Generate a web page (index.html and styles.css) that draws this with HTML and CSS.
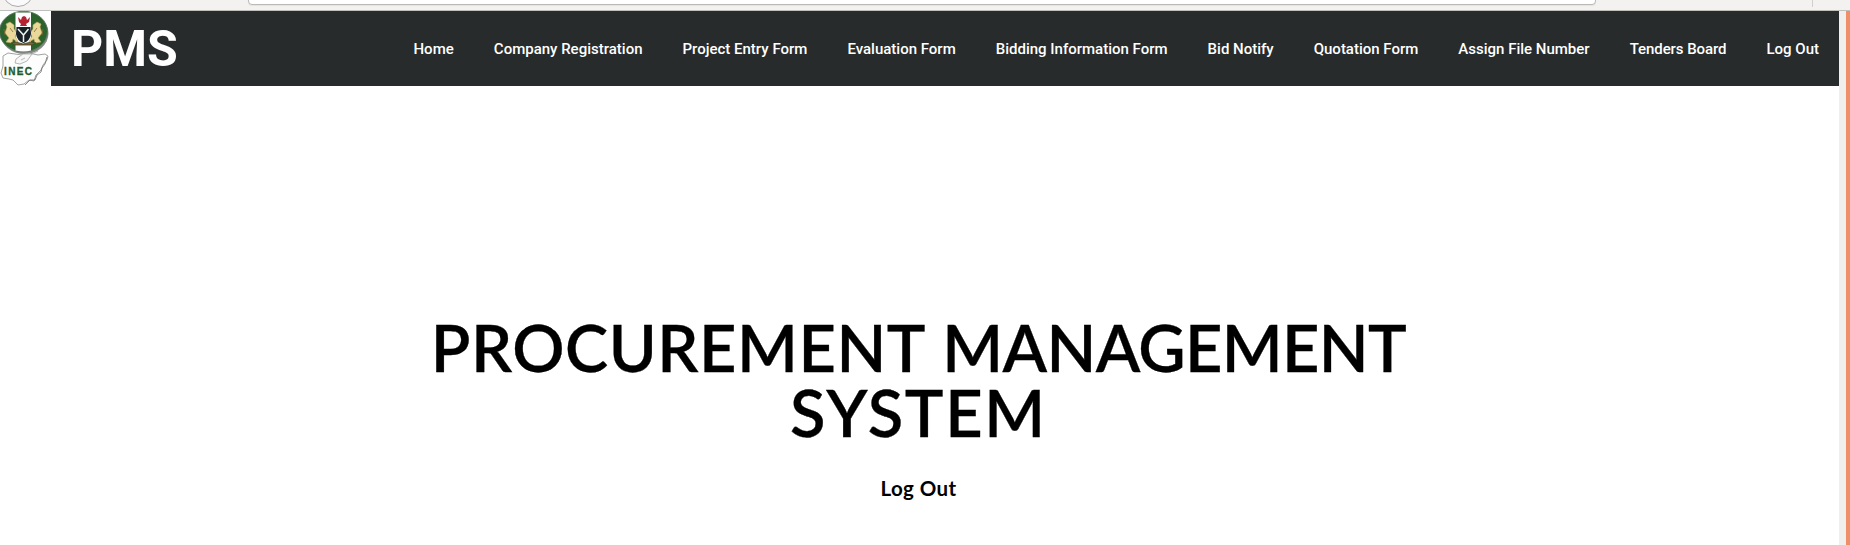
FILE: index.html
```html
<!DOCTYPE html>
<html lang="en">
<head>
<meta charset="utf-8">
<title>Procurement Management System</title>
<link rel="stylesheet" href="styles.css">
</head>
<body>
<div class="chrome">
  <span class="back"></span>
  <span class="address"></span>
  <span class="divider"></span>
</div>
<div class="window">
  <div class="page">
    <header class="navbar">
      <a class="logo">
        <svg width="51" height="75" viewBox="0 0 51 75">
          <rect width="51" height="75" fill="#fff"/>
          <ellipse cx="24.500" cy="22.500" rx="24" ry="20.500" fill="#858985"/>
          <ellipse cx="23.500" cy="20.500" rx="24" ry="20.300" fill="#2b632c" stroke="#607865"/>
          <path d="M15.500 1.500h15.500v38q-7 2-15.500 0z" fill="#fff"/>
          <path d="M18 6l1 5 2 2-1 2h7l-1-2 3-2 1-5-3 3-1-3-2-1-2 1-1 3z" fill="#b52231"/>
          <path d="M6 31l3-4-4-5 2-6-1-3 4-2 4 3 0 4 3 4-2 3 3 6-5-3-1 4zM41 31l-3-4 4-5-2-6 1-3-4-2-4 3 0 4-3 4 2 3-3 6 5-3 1 4z" fill="#ead79a" stroke="#c3a65c" stroke-width=".6"/>
          <path d="M4 18l1 6M43 18l-1 6M10 17l3 4M37 17l-3 4" stroke="#826a31" stroke-width=".8"/>
          <path d="M16.500 16h14l.5 7q-1 7-7.500 9-6.500-2-7.500-9z" fill="#182126"/>
          <path d="M18 18l5.500 6 5-6M23.500 24v7" fill="none" stroke="#eef2f3" stroke-width="1.500"/>
          <path d="M11 32l5-1 7 2 8-2 5 1-4 2H15z" fill="#8b5c2e" stroke="#364a26" stroke-width=".8"/>
          <path d="M3 45l5-3 7 1 7 1 7-2 9 2 7-1 3 2-1 4-4 5-2 5-5 5-2 6-5-1-5 4-6 1-5-5-4-1-6-1-2-5 2-7z" fill="#fcfdfc" stroke="#a1a4a1" stroke-width="1"/>
          <path d="M16 48l7-5h9l-5 7-7 3-5-1zM21 49l4-2M32 43l6-3" fill="#f8f8f8" stroke="#a5a8a5" stroke-width=".8"/>
          <path d="M47 46l-2 7-3 4-1 4-4 3-2 5h-5l-5 5" fill="none" stroke="#686d68" stroke-width=".8"/>
          <text class="logo-text" x="4" y="64" textLength="28">INEC</text>
        </svg>
      </a>
      <a class="brand">PMS</a>
      <nav class="menu">
        <a class="wide">Home</a><a>Company Registration</a><a>Project Entry Form</a><a>Evaluation Form</a><a>Bidding Information Form</a><a>Bid Notify</a><a>Quotation Form</a><a>Assign File Number</a><a class="tight">Tenders Board</a><a>Log Out</a>
      </nav>
    </header>
    <main class="hero">
      <h1 class="title"><span class="line"><span class="procurement">PROCUREMENT</span> <span class="management">MANAGEMENT</span></span><span class="line system">SYSTEM</span></h1>
      <a class="logout">Log Out</a>
    </main>
  </div>
  <div class="scrollbar"></div>
  <div class="edge"></div>
</div>
</body>
</html>
```
FILE: styles.css
```css
* { box-sizing: border-box; }
body { margin: 0; height: 545px; overflow: hidden; background: #fff; }
.chrome { position: relative; height: 11px; background: #f3f2f0; border-bottom: 1px solid #bfbfbb; overflow: hidden; }
.back { position: absolute; left: 2px; top: -25px; width: 32px; height: 32px; border: 1px solid #aaa; border-radius: 50%; background: #fafafa; }
.address { position: absolute; left: 248px; top: -20px; width: 1348px; height: 25px; border: 1px solid #bbb9b7; border-radius: 4px; background: #fff; box-shadow: 0 1px 1px #e5e4e2; }
.divider { position: absolute; left: 1812px; top: 0; width: 1px; height: 7px; background: #d0cfcd; }
.window { display: flex; height: 534px; }
.page { width: 1839px; background: #fff; }
.scrollbar { width: 7px; background: #f0efee; }
.edge { width: 4px; background: #f08e69; }
.navbar { display: flex; align-items: center; height: 75px; padding-right: 20px; background: #272b2c; color: #fff; font-family: Roboto, sans-serif; }
.logo { width: 51px; height: 75px; }
.logo svg { display: block; }
.logo-text { font: bold 10px "Liberation Sans", sans-serif; fill: #245b2b; stroke: #245b2b; stroke-width: .3px; }
.brand { margin-left: 20px; padding-top: 2px; font-size: 50px; font-weight: 700; line-height: 75px; }
.menu { display: flex; gap: 40px; margin-left: auto; font-size: 15px; font-weight: 500; line-height: 20px; white-space: nowrap; }
.menu .wide { letter-spacing: .05px; }
.menu .tight { letter-spacing: -.07px; }
.hero { display: flex; flex-direction: column; align-items: center; padding-top: 229px; color: #000; font-family: Lato, sans-serif; }
.title { margin: 0; padding-right: 2px; font-size: 65px; font-weight: 600; line-height: 65px; text-align: center; -webkit-text-stroke: .3px #000; }
.line { display: block; white-space: nowrap; }
.procurement { letter-spacing: .5px; }
.management { letter-spacing: -.65px; }
.system { letter-spacing: 1.7px; }
.logout { margin-top: 28px; padding-right: 2px; font-size: 20.5px; font-weight: 700; line-height: 30px; letter-spacing: .4px; }
```
